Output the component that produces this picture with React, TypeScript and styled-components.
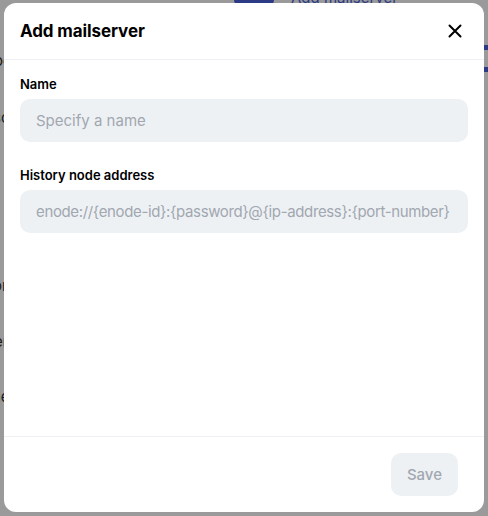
import React from "react";
import styled, { createGlobalStyle } from "styled-components";

const Global = createGlobalStyle`
  html, body { margin: 0; padding: 0; }
  body {
    width: 488px;
    height: 516px;
    overflow: hidden;
    font-family: Inter, "Noto Sans", "Liberation Sans", sans-serif;
    background: #9a9a9a;
  }
  * { box-sizing: border-box; }
`;

const Page = styled.div`
  position: relative;
  width: 488px;
  height: 516px;
  overflow: hidden;
  background: #9a9a9a;
`;

const BehindButton = styled.div`
  position: absolute;
  left: 234px;
  top: -30px;
  width: 40px;
  height: 36px;
  border-radius: 6px;
  background: #2c3a86;
`;

const BehindText = styled.div<{ $x: number; $y: number; $c?: string }>`
  position: absolute;
  left: ${(p) => p.$x}px;
  top: ${(p) => p.$y}px;
  font-size: 15px;
  line-height: 18px;
  color: ${(p) => p.$c || "#1a1a1a"};
  white-space: nowrap;
`;

const BehindArc = styled.div<{ $y: number }>`
  position: absolute;
  left: 480px;
  top: ${(p) => p.$y}px;
  width: 16px;
  height: 5px;
  background: #2c3a86;
  border-radius: 3px;
`;

const Modal = styled.div`
  position: absolute;
  left: 4px;
  top: 3px;
  width: 480px;
  height: 509px;
  background: #ffffff;
  border-radius: 12px;
  display: flex;
  flex-direction: column;
  overflow: hidden;
`;

const Header = styled.div`
  height: 57px;
  flex: none;
  display: flex;
  align-items: center;
  justify-content: space-between;
  padding: 0 22px 0 16px;
  border-bottom: 1px solid #eef0f3;
`;

const Title = styled.h2`
  margin: 0;
  font-size: 17px;
  font-weight: 700;
  color: #000000;
  letter-spacing: -0.1px;
`;

const CloseButton = styled.button`
  width: 14px;
  height: 14px;
  padding: 0;
  border: none;
  background: none;
  display: flex;
  align-items: center;
  justify-content: center;
  cursor: pointer;
`;

const Body = styled.div`
  flex: 1;
  padding: 14px 16px 0 16px;
  display: flex;
  flex-direction: column;
  gap: 23px;
`;

const Field = styled.div`
  display: flex;
  flex-direction: column;
  gap: 5px;
`;

const Label = styled.label`
  font-size: 13px;
  line-height: 20px;
  font-weight: 600;
  color: #000000;
`;

const Input = styled.input<{ $tight?: boolean }>`
  height: 43px;
  width: 100%;
  border: none;
  outline: none;
  border-radius: 10px;
  background: #eef1f4;
  padding: 0 6px 0 16px;
  font-family: inherit;
  font-size: 15px;
  letter-spacing: ${(p) => (p.$tight ? "-0.36px" : "0")};
  color: #000;
  &::placeholder {
    color: #a1a7b0;
  }
`;

const Footer = styled.div`
  flex: none;
  height: 76px;
  border-top: 1px solid #eef0f3;
  display: flex;
  align-items: flex-start;
  justify-content: flex-end;
  padding: 16px 26px 0 0;
`;

const SaveButton = styled.button`
  height: 43px;
  padding: 0 16px;
  border: none;
  border-radius: 10px;
  background: #eef1f4;
  color: #a1a7b0;
  font-family: inherit;
  font-size: 15px;
  font-weight: 500;
`;

export default function App() {
  return (
    <>
      <Global />
      <Page>
        <BehindButton />
        <BehindText $x={291} $y={-11} $c="#2c3a86">Add mailserver</BehindText>
        <BehindText $x={-6} $y={52}>oc</BehindText>
        <BehindText $x={-7} $y={109}>sc</BehindText>
        <BehindText $x={-7} $y={277}>or</BehindText>
        <BehindText $x={-6} $y={333}>er</BehindText>
        <BehindText $x={-8} $y={388}>ne</BehindText>
        <BehindArc $y={45} />
        <BehindArc $y={67} />
        <Modal>
          <Header>
            <Title>Add mailserver</Title>
            <CloseButton aria-label="Close">
              <svg width="14" height="14" viewBox="0 0 14 14">
                <path d="M1.5 1.5L12.5 12.5M12.5 1.5L1.5 12.5" stroke="#000" strokeWidth="2" strokeLinecap="round" />
              </svg>
            </CloseButton>
          </Header>
          <Body>
            <Field>
              <Label>Name</Label>
              <Input placeholder="Specify a name" />
            </Field>
            <Field>
              <Label>History node address</Label>
              <Input $tight placeholder="enode://{enode-id}:{password}@{ip-address}:{port-number}" />
            </Field>
          </Body>
          <Footer>
            <SaveButton disabled>Save</SaveButton>
          </Footer>
        </Modal>
      </Page>
    </>
  );
}
